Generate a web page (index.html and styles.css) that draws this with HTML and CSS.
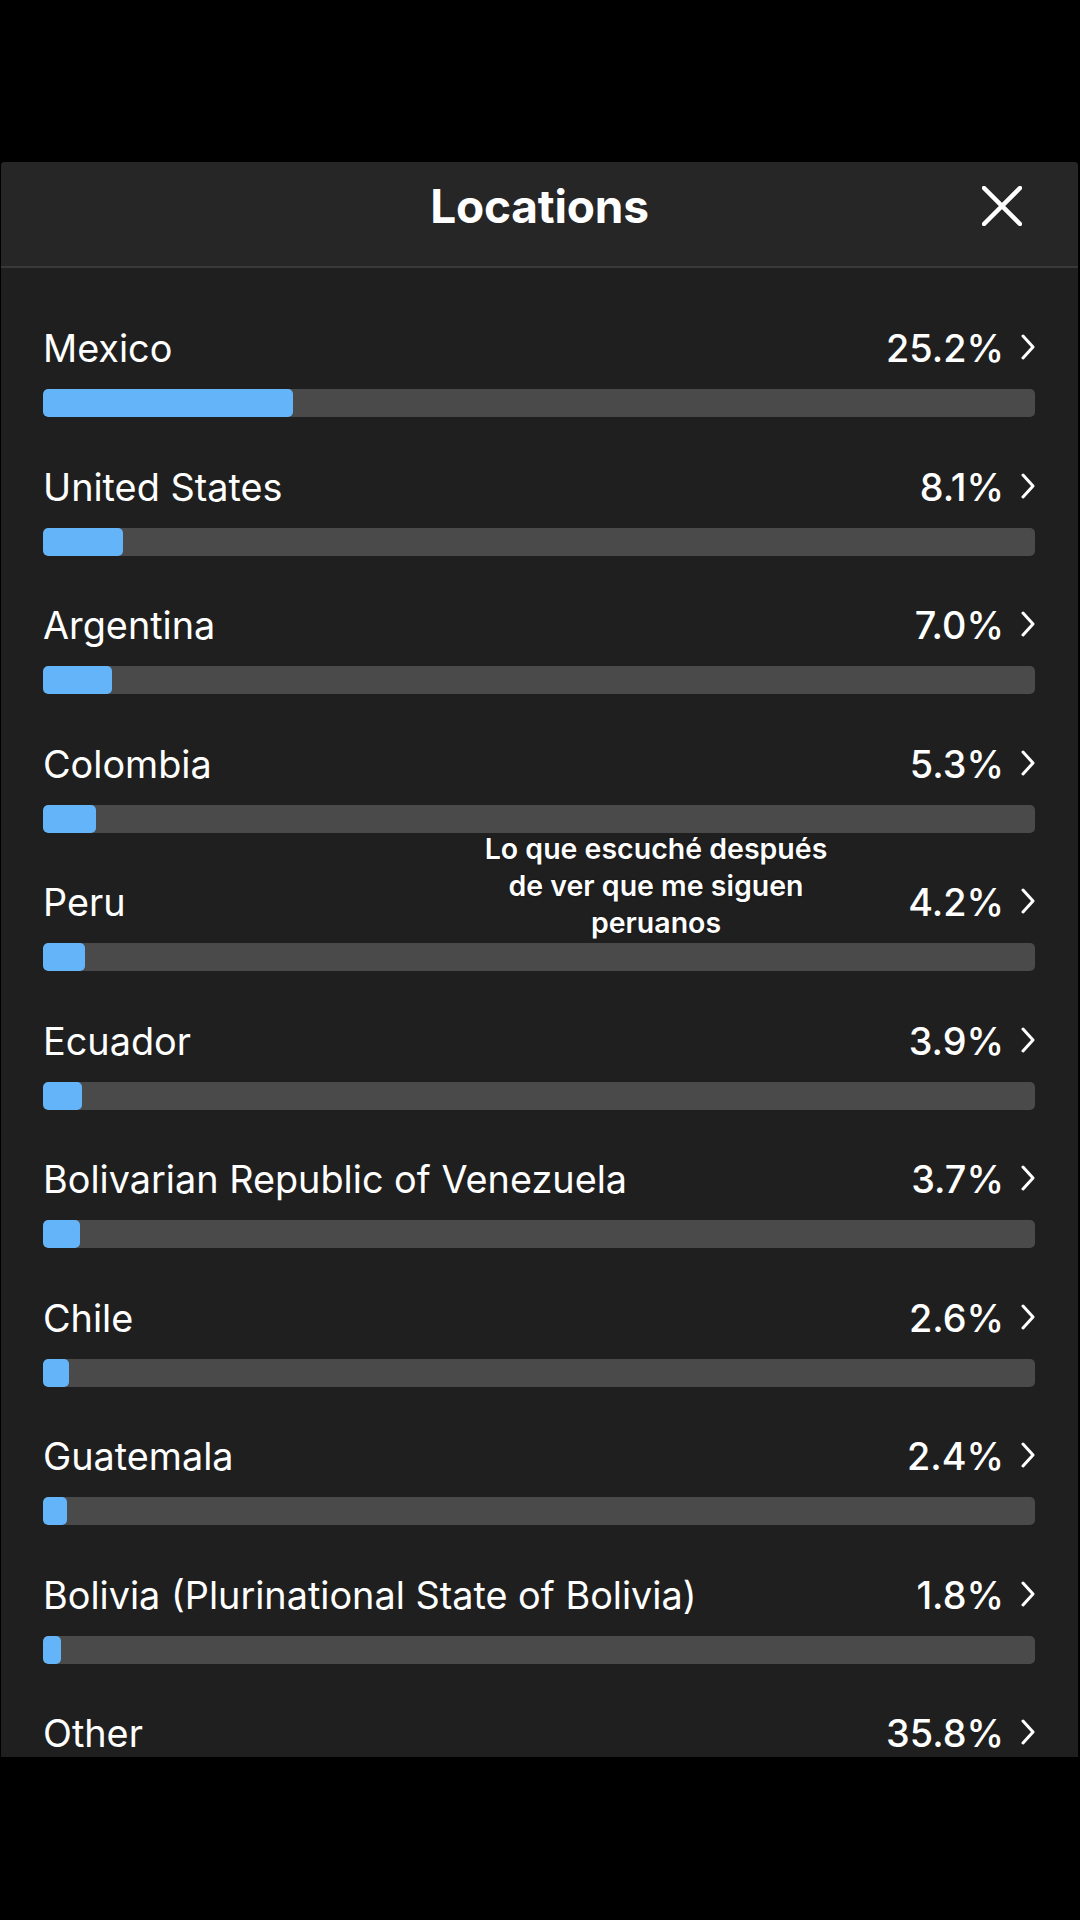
FILE: index.html
```html
<!DOCTYPE html>
<html lang="en">
<head>
  <meta charset="UTF-8">
  <meta name="viewport" content="width=device-width, initial-scale=1.0">
  <title>Locations</title>
  <link rel="stylesheet" href="styles.css">
</head>
<body>
  <div class="sheet">
    <div class="sheet-header">
      <h2>Locations</h2>
      <button class="close-btn" aria-label="Close">
        <svg viewBox="0 0 40 40" width="40" height="40">
          <path d="M2 2 L38 38 M38 2 L2 38" stroke="#fff" stroke-width="4.5" stroke-linecap="round" fill="none"/>
        </svg>
      </button>
    </div>

    <div class="location-list">
      <div class="location">
        <div class="location-top"><span class="name">Mexico</span><span class="pct">25.2%</span><svg class="chev" viewBox="0 0 14 26"><path d="M2 2 L12 13 L2 24"/></svg></div>
        <div class="bar"><div class="fill" style="width: 25.2%"></div></div>
      </div>
      <div class="location">
        <div class="location-top"><span class="name">United States</span><span class="pct">8.1%</span><svg class="chev" viewBox="0 0 14 26"><path d="M2 2 L12 13 L2 24"/></svg></div>
        <div class="bar"><div class="fill" style="width: 8.1%"></div></div>
      </div>
      <div class="location">
        <div class="location-top"><span class="name">Argentina</span><span class="pct">7.0%</span><svg class="chev" viewBox="0 0 14 26"><path d="M2 2 L12 13 L2 24"/></svg></div>
        <div class="bar"><div class="fill" style="width: 7.0%"></div></div>
      </div>
      <div class="location">
        <div class="location-top"><span class="name">Colombia</span><span class="pct">5.3%</span><svg class="chev" viewBox="0 0 14 26"><path d="M2 2 L12 13 L2 24"/></svg></div>
        <div class="bar"><div class="fill" style="width: 5.3%"></div></div>
      </div>
      <div class="location">
        <div class="location-top"><span class="name">Peru</span><span class="pct">4.2%</span><svg class="chev" viewBox="0 0 14 26"><path d="M2 2 L12 13 L2 24"/></svg></div>
        <div class="bar"><div class="fill" style="width: 4.2%"></div></div>
      </div>
      <div class="location">
        <div class="location-top"><span class="name">Ecuador</span><span class="pct">3.9%</span><svg class="chev" viewBox="0 0 14 26"><path d="M2 2 L12 13 L2 24"/></svg></div>
        <div class="bar"><div class="fill" style="width: 3.9%"></div></div>
      </div>
      <div class="location">
        <div class="location-top"><span class="name">Bolivarian Republic of Venezuela</span><span class="pct">3.7%</span><svg class="chev" viewBox="0 0 14 26"><path d="M2 2 L12 13 L2 24"/></svg></div>
        <div class="bar"><div class="fill" style="width: 3.7%"></div></div>
      </div>
      <div class="location">
        <div class="location-top"><span class="name">Chile</span><span class="pct">2.6%</span><svg class="chev" viewBox="0 0 14 26"><path d="M2 2 L12 13 L2 24"/></svg></div>
        <div class="bar"><div class="fill" style="width: 2.6%"></div></div>
      </div>
      <div class="location">
        <div class="location-top"><span class="name">Guatemala</span><span class="pct">2.4%</span><svg class="chev" viewBox="0 0 14 26"><path d="M2 2 L12 13 L2 24"/></svg></div>
        <div class="bar"><div class="fill" style="width: 2.4%"></div></div>
      </div>
      <div class="location">
        <div class="location-top"><span class="name">Bolivia (Plurinational State of Bolivia)</span><span class="pct">1.8%</span><svg class="chev" viewBox="0 0 14 26"><path d="M2 2 L12 13 L2 24"/></svg></div>
        <div class="bar"><div class="fill" style="width: 1.8%"></div></div>
      </div>
      <div class="location">
        <div class="location-top"><span class="name">Other</span><span class="pct">35.8%</span><svg class="chev" viewBox="0 0 14 26"><path d="M2 2 L12 13 L2 24"/></svg></div>
        <div class="bar"><div class="fill" style="width: 35.8%"></div></div>
      </div>
    </div>

    <div class="caption">Lo que escuché después<br>de ver que me siguen<br>peruanos</div>
  </div>
</body>
</html>
```

FILE: styles.css
```css
body {
  margin: 0;
  background-color: #000;
  font-family: Inter, 'Liberation Sans', sans-serif;
  color: #fff;
}

.sheet {
  position: relative;
  margin: 162px 2px 0 1px;
  height: 1595px;
  background-color: #1f1f1f;
  border-radius: 4px 4px 0 0;
  overflow: hidden;
}

.sheet-header {
  position: relative;
  height: 104px;
  background-color: #262626;
  border-bottom: 2px solid #383838;
  display: flex;
  justify-content: center;
  align-items: center;
}

.sheet-header h2 {
  margin: 0 0 16px 0;
  font-size: 46px;
  font-weight: 700;
  letter-spacing: -0.2px;
}

.close-btn {
  position: absolute;
  right: 56px;
  top: 24px;
  width: 40px;
  height: 40px;
  padding: 0;
  background: none;
  border: none;
}

.close-btn svg {
  display: block;
}

.location-list {
  padding: 57px 43px 0 42px;
}

.location {
  height: 138.5px;
}

.location-top {
  display: flex;
  align-items: center;
  height: 46px;
  font-size: 37.8px;
  line-height: 46px;
}

.name {
  flex: 1;
  font-weight: 400;
}

.pct {
  font-weight: 500;
}

.chev {
  width: 14px;
  height: 26px;
  margin-left: 17px;
  margin-top: -2px;
  fill: none;
  stroke: #fff;
  stroke-width: 3;
  stroke-linecap: round;
  stroke-linejoin: round;
}

.bar {
  margin-top: 18px;
  height: 28px;
  background-color: #4a4a4a;
  border-radius: 5px;
  overflow: hidden;
}

.fill {
  height: 100%;
  background-color: #64b4fa;
  border-radius: 5px;
}

.caption {
  position: absolute;
  top: 668px;
  left: 655px;
  transform: translateX(-50%);
  white-space: nowrap;
  text-align: center;
  font-size: 28.5px;
  line-height: 37px;
  font-weight: 600;
  text-shadow: 0 0 2px rgba(0, 0, 0, 0.5);
}
```
